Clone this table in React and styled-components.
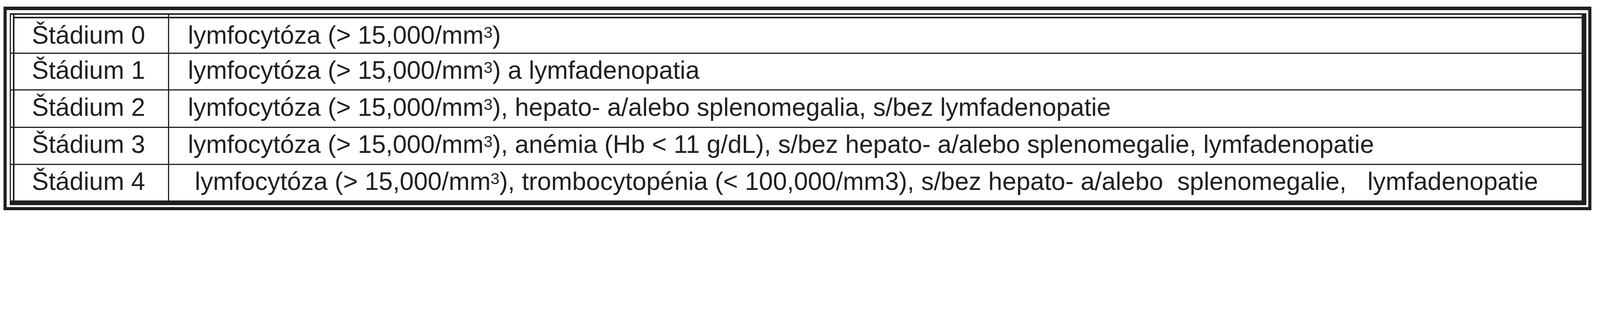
import React, { useEffect, useState } from "react";
import styled, { createGlobalStyle } from "styled-components";

const ink = "#231f20";
const DESIGN_WIDTH = 5848;

const GlobalStyle = createGlobalStyle`
  html, body {
    margin: 0;
    padding: 0;
    background: #ffffff;
    overflow: hidden;
  }
  body {
    font-family: "Liberation Sans", Arial, sans-serif;
    color: ${ink};
  }
`;

const stages = [
  { label: "Štádium 0", height: 125, text: ["lymfocytóza (> 15,000/mm", "3", ")"] },
  { label: "Štádium 1", height: 131, text: ["lymfocytóza (> 15,000/mm", "3", ") a lymfadenopatia"] },
  {
    label: "Štádium 2",
    height: 132,
    text: ["lymfocytóza (> 15,000/mm", "3", "), hepato- a/alebo splenomegalia, s/bez lymfadenopatie"],
  },
  {
    label: "Štádium 3",
    height: 131,
    text: [
      "lymfocytóza (> 15,000/mm",
      "3",
      "), anémia (Hb < 11 g/dL), s/bez hepato- a/alebo splenomegalie, lymfadenopatie",
    ],
  },
  {
    label: "Štádium 4",
    height: 131,
    text: [
      " lymfocytóza (> 15,000/mm",
      "3",
      "), trombocytopénia (< 100,000/mm3), s/bez hepato- a/alebo  splenomegalie,   lymfadenopatie",
    ],
  },
];

// the layout is drawn for a 5848px wide page; scale it to the real window
function usePageScale() {
  const get = () => (typeof window === "undefined" ? 1 : window.innerWidth / DESIGN_WIDTH);
  const [scale, setScale] = useState(get);
  useEffect(() => {
    const onResize = () => setScale(get());
    window.addEventListener("resize", onResize);
    return () => window.removeEventListener("resize", onResize);
  }, []);
  return scale;
}

export default function App() {
  const scale = usePageScale();
  return (
    <>
      <GlobalStyle />
      <Page style={{ zoom: scale }}>
        <Frame>
          <StageTable>
            <Row $top>
              <Strip />
              <LabelCell $h={7} />
              <DescCell $h={7} />
            </Row>
            {stages.map((s, i) => (
              <Row key={s.label} $last={i === stages.length - 1}>
                <Strip />
                <LabelCell $h={s.height} $first={i === 0}>
                  {s.label}
                </LabelCell>
                <DescCell $h={s.height} $first={i === 0}>
                  {s.text[0]}
                  <Sup>{s.text[1]}</Sup>
                  {s.text[2]}
                </DescCell>
              </Row>
            ))}
          </StageTable>
        </Frame>
      </Page>
    </>
  );
}

const Page = styled.div`
  width: ${DESIGN_WIDTH}px;
  box-sizing: border-box;
  padding: 24px 31px 0 13px;
`;

const Frame = styled.div`
  border: 12px solid ${ink};
  border-top-width: 13px;
  padding: 12px 7px 7px 12px;
`;

const StageTable = styled.div`
  display: flex;
  flex-direction: column;
  border-style: solid;
  border-color: ${ink};
  border-width: 6px 18px 18px 5px;
`;

const Row = styled.div`
  display: flex;
  border-bottom: ${(p) => (p.$last || p.$top ? "none" : `5px solid ${ink}`)};
`;

const Strip = styled.div`
  width: 7px;
  flex: none;
`;

const Cell = styled.div`
  box-sizing: content-box;
  border-top: ${(p) => (p.$first ? `6px solid ${ink}` : "none")};
  font-size: 92px;
  line-height: 1;
  white-space: pre;
  overflow: hidden;
  padding-top: ${(p) => (p.$h > 7 ? 15 : 0)}px;
  height: ${(p) => (p.$h > 7 ? p.$h - 15 : p.$h)}px;
`;

const LabelCell = styled(Cell)`
  width: 497px;
  flex: none;
  padding-left: 63px;
  border-left: 6px solid ${ink};
  border-right: 5px solid ${ink};
`;

const DescCell = styled(Cell)`
  flex: 1;
  padding-left: 69px;
`;

const Sup = styled.span`
  font-size: 0.63em;
  line-height: 0;
  vertical-align: 0.37em;
`;
